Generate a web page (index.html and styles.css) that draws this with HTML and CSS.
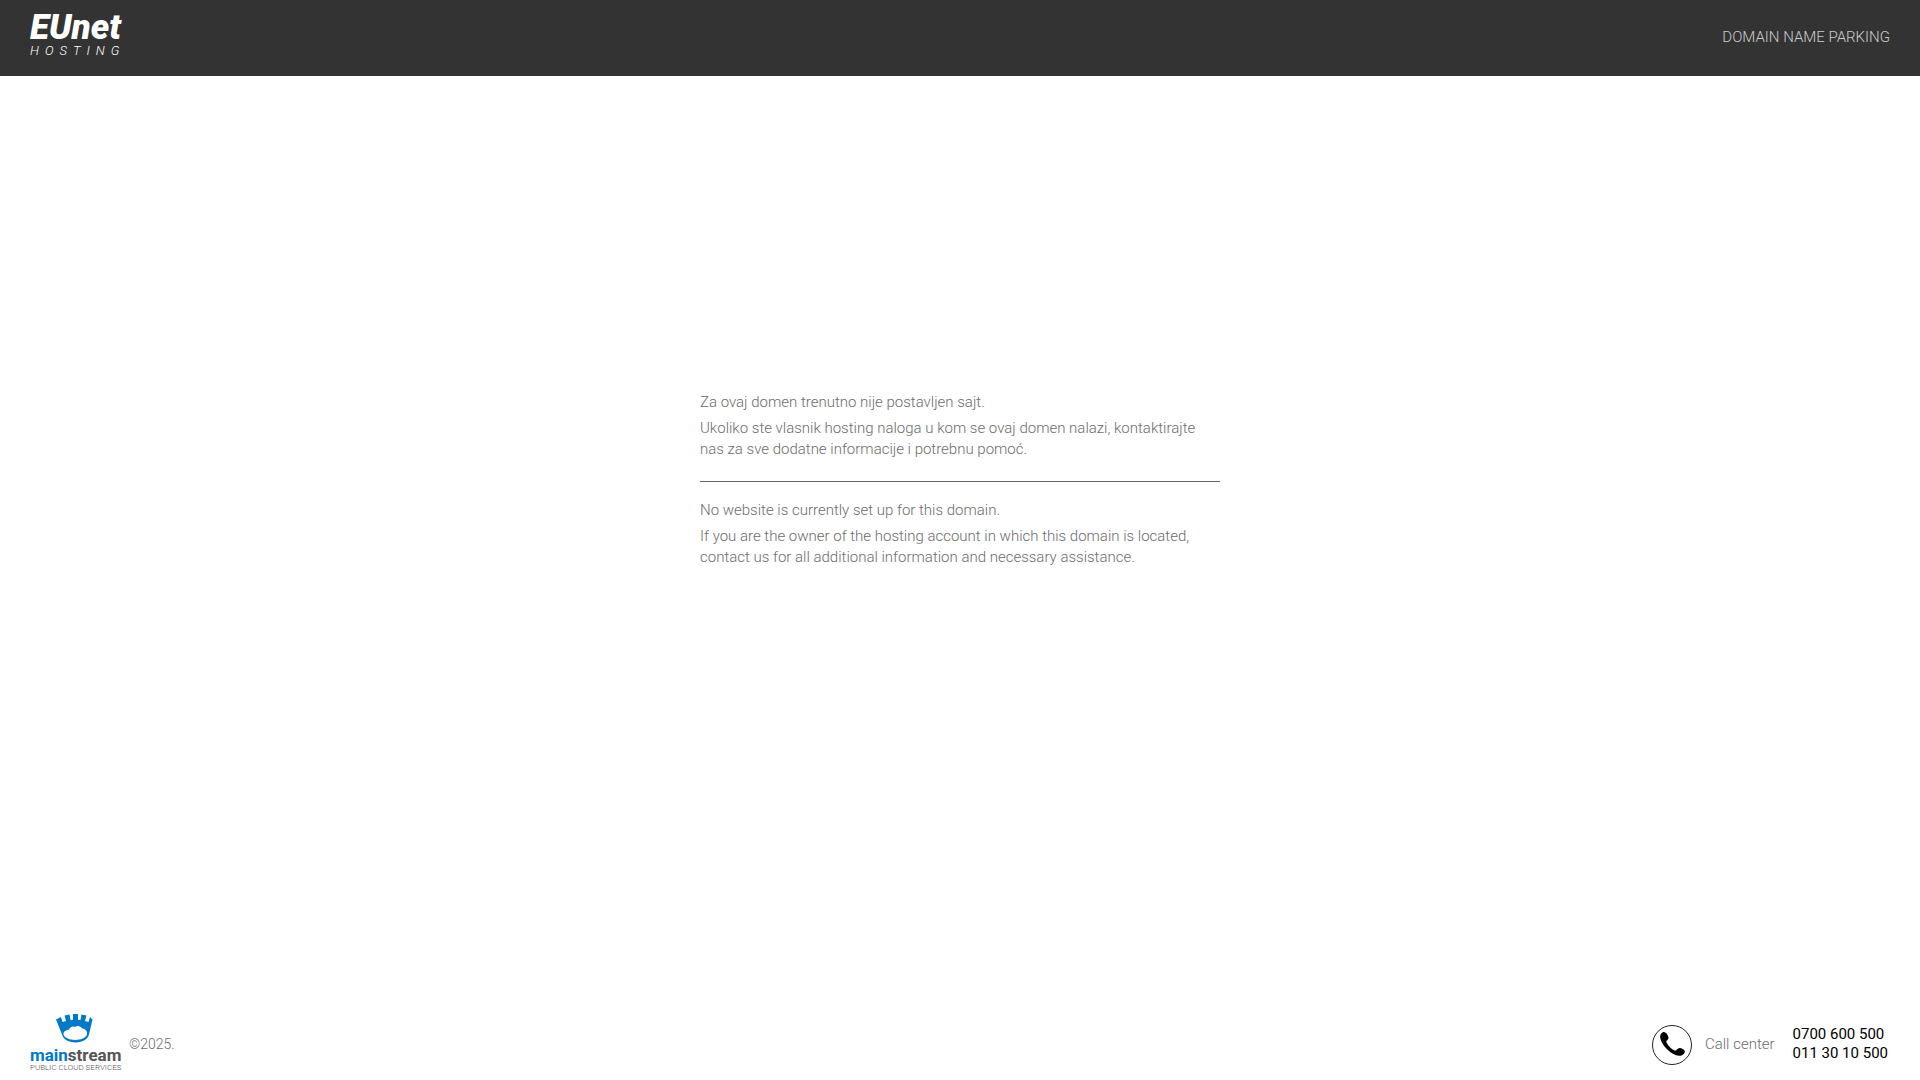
FILE: index.html
```html
<!DOCTYPE html>
<html lang="sr">
<head>
  <meta charset="UTF-8">
  <meta name="viewport" content="width=device-width, initial-scale=1">
  <title>Domain name parking</title>
  <link rel="stylesheet" href="styles.css">
</head>
<body>

  <header class="header">
    <a href="#" class="logo" aria-label="EUnet Hosting">
      <svg width="104" height="60" viewBox="0 0 104 60">
        <text><tspan class="logo-name" x="0" y="32">EUnet</tspan><tspan class="logo-sub" x="0" y="48">HOSTING</tspan></text>
      </svg>
    </a>
    <span class="header-title">DOMAIN NAME PARKING</span>
  </header>

  <main class="content">
    <div class="message">
      <p>Za ovaj domen trenutno nije postavljen sajt.</p>
      <p>Ukoliko ste vlasnik hosting naloga u kom se ovaj domen nalazi, kontaktirajte nas za sve dodatne informacije i potrebnu pomoć.</p>
      <hr>
      <div lang="en">
        <p>No website is currently set up for this domain.</p>
        <p>If you are the owner of the hosting account in which this domain is located, contact us for all additional information and necessary assistance.</p>
      </div>
    </div>
  </main>

  <footer class="footer">
    <div class="footer-left">
      <a href="#" class="mainstream" aria-label="Mainstream public cloud services">
        <svg width="94" height="60" viewBox="0 0 94 60">
          <!-- crown -->
          <path fill="#0079c8" d="M26 5.500L31 3L32.500 8L36 7L34.500 1.500L39.500 0.500L40.500 6L43 5.800L43 0L48 0L48 5.800L50.500 6L51.500 0.500L56.500 1.500L55 7L58.500 8L60 3L62.500 5.500L59 20.500C56.500 31 34.500 31 32 20.500Z"/>
          <path fill="#fff" d="M33.500 20.500C33 17 37 16 39 15.500C40 13 43 12 45 13C47 11 51 12 52 14.500C55 14.500 57.500 17 57 20.500C55 27.500 36 28 33.500 20.500Z"/>
          <text class="ms-name" x="0" y="47"><tspan class="ms-blue">main</tspan>stream</text>
          <text class="ms-sub" x="0" y="56">PUBLIC CLOUD SERVICES</text>
        </svg>
      </a>
      <span class="copyright">©2025.</span>
    </div>
    <div class="footer-right">
      <svg class="phone-icon" width="42" height="42" viewBox="0 -1 42 42">
        <circle cx="21" cy="21" r="19.500" fill="none" stroke="#222" stroke-width="1"/>
        <path d="M11.500 8.500C14 7 16.500 10 17.500 13.500C18 15.500 14.500 16.500 15.500 18.500C17.500 22.500 20.500 25 23.500 26.500C25.500 27.500 26.500 23.500 29 24C32 24.500 35 26.500 33.500 29C31.500 32 28 32.500 24.500 31C17.500 28 11.500 21.500 9.500 15C8.500 12 9.500 9.500 11.500 8.500Z"/>
      </svg>
      <span class="call">Call center</span>
      <div class="phones">
        <a href="tel:0700600500">0700 600 500</a>
        <a href="tel:0113010500">011 30 10 500</a>
      </div>
    </div>
  </footer>

</body>
</html>
```
FILE: styles.css
```css
* {
  box-sizing: border-box;
}

body {
  margin: 0;
  min-height: 100vh;
  display: flex;
  flex-direction: column;
  font-family: Roboto, "Liberation Sans", sans-serif;
  font-weight: 300;
  font-size: 15px;
  line-height: 21px;
  color: #6c6c6c;
  background: #fff;
}

a {
  color: inherit;
  text-decoration: none;
}

svg {
  display: block;
}

.header {
  display: flex;
  justify-content: space-between;
  align-items: center;
  height: 76px;
  padding: 0 30px 2px;
  background: #333;
  color: #ccc;
}

.logo-name {
  font-size: 35px;
  font-weight: 900;
  font-style: italic;
  fill: #fff;
}

.logo-sub {
  font-size: 13px;
  font-weight: 300;
  font-style: italic;
  letter-spacing: 6px;
  fill: #fff;
}

.content {
  flex: 1;
  display: flex;
  justify-content: center;
  align-items: center;
  padding-bottom: 126px;
}

.message {
  width: 100%;
  max-width: 520px;
}

.message p {
  margin: 0 0 5px;
}

.message hr {
  margin: 21px 0 18px;
  border: 0;
  border-top: 1px solid #666;
}

.footer {
  display: flex;
  justify-content: space-between;
  align-items: center;
  padding: 0 32px 6px 30px;
}

.footer-left,
.footer-right {
  display: flex;
  align-items: center;
}

.ms-name {
  font-size: 17px;
  font-weight: 700;
  fill: #555;
}

.ms-name .ms-blue {
  fill: #0079c8;
}

.ms-sub {
  font-size: 8px;
  font-weight: 300;
  fill: #555;
}

.copyright {
  margin-left: 5px;
  font-size: 14px;
}

.phone-icon {
  margin-right: 12px;
}

.call {
  margin-right: 18px;
}

.phones {
  display: flex;
  flex-direction: column;
  font-weight: 400;
  line-height: 19px;
  color: #000;
}
```
